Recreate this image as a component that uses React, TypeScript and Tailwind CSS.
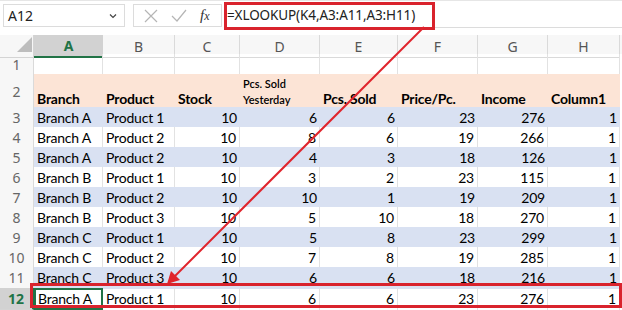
import React from "react";

const COLS = "grid grid-cols-[34px_69px_72px_65px_80px_78px_80px_70px_72px]";
const UI = { fontFamily: '"Noto Sans", "Open Sans", sans-serif' };
const CELL = { fontFamily: 'Lato, "Liberation Sans", sans-serif' };

const rows: (string | number)[][] = [
  ["Branch A", "Product 1", 10, 6, 6, 23, 276, 1],
  ["Branch A", "Product 2", 10, 8, 6, 19, 266, 1],
  ["Branch A", "Product 2", 10, 4, 3, 18, 126, 1],
  ["Branch B", "Product 1", 10, 3, 2, 23, 115, 1],
  ["Branch B", "Product 2", 10, 10, 1, 19, 209, 1],
  ["Branch B", "Product 3", 10, 5, 10, 18, 270, 1],
  ["Branch C", "Product 1", 10, 5, 8, 23, 299, 1],
  ["Branch C", "Product 2", 10, 7, 8, 19, 285, 1],
  ["Branch C", "Product 3", 10, 6, 6, 18, 216, 1],
];

function RowNum({ n, active }: { n: number; active?: boolean }) {
  return (
    <div
      style={UI}
      className={
        active
          ? "flex items-center justify-center bg-[#d2d2d2] border-r-2 border-r-[#217346] border-b border-b-[#d4d4d4] text-[14px] font-bold text-[#217346]"
          : "flex items-center justify-center bg-[#f7f7f7] border-r border-b border-[#dadada] text-[14px] text-[#666]"
      }
    >
      {n}
    </div>
  );
}

function DataRow({ n, data, shaded }: { n: number; data: (string | number)[]; shaded: boolean }) {
  return (
    <div className={`${COLS} h-[20px]`}>
      <RowNum n={n} />
      {data.map((v, i) => (
        <div
          key={i}
          style={CELL}
          className={`flex items-center whitespace-nowrap overflow-hidden text-[14px] tracking-[-0.2px] text-black leading-none px-[3px] ${
            typeof v === "number" ? "justify-end" : "justify-start"
          } ${shaded ? "bg-[#d9e1f2]" : "bg-white border-r border-[#e2e2e2]"}`}
        >
          {v}
        </div>
      ))}
    </div>
  );
}

export default function App() {
  const letters = ["A", "B", "C", "D", "E", "F", "G", "H"];
  const heads = ["Branch", "Product", "Stock", "", "Pcs. Sold", "Price/Pc.", "Income", "Column1"];
  const last = ["Branch A", "Product 1", 10, 6, 6, 23, 276, 1];

  return (
    <div className="relative w-[622px] h-[310px] overflow-hidden bg-white">
      {/* formula bar */}
      <div className="h-[35px] border-t border-[#e6e6e6] flex items-start pt-[3px] bg-white">
        <div
          style={UI}
          className="ml-[3px] w-[122px] h-[23px] border border-[#dcdcdc] flex items-center justify-between px-[4px] text-[14px] text-[#222]"
        >
          <span>A12</span>
          <svg width="10" height="10" viewBox="0 0 10 10" className="mr-[2px]">
            <path d="M2 3.5 L5 6.5 L8 3.5" fill="none" stroke="#444" strokeWidth="1.2" />
          </svg>
        </div>
        <div className="ml-[8px] w-[89px] h-[23px] border border-[#dcdcdc] flex items-center">
          <svg width="14" height="14" viewBox="0 0 14 14" className="ml-[10px]">
            <path d="M1 1 L13 13 M13 1 L1 13" stroke="#b5b5b5" strokeWidth="1.2" />
          </svg>
          <svg width="16" height="14" viewBox="0 0 16 14" className="ml-[13px]">
            <path d="M1 7 L6 12 L15 1" fill="none" stroke="#b5b5b5" strokeWidth="1.2" />
          </svg>
          <span
            style={{ fontFamily: '"Liberation Serif", serif' }}
            className="ml-[13px] text-[15px] italic text-[#333]"
          >
            f<span className="text-[12px]">x</span>
          </span>
        </div>
        <div
          style={UI}
          className="ml-[2px] flex-1 h-[24px] border-b border-[#dcdcdc] flex items-center pl-[3px] text-[13.5px] tracking-[-0.1px] text-[#222]"
        >
          =XLOOKUP(K4,A3:A11,A3:H11)
        </div>
      </div>

      {/* column headers */}
      <div className={`${COLS} h-[19px] bg-[#f7f7f7]`}>
        <div className="relative border-r border-b border-[#d4d4d4]">
          <svg width="34" height="19" viewBox="0 0 34 19" className="absolute inset-0">
            <polygon points="32,2 32,17 17,17" fill="#bdbdbd" />
          </svg>
        </div>
        {letters.map((l) => (
          <div
            key={l}
            style={UI}
            className={
              l === "A"
                ? "flex items-center justify-center bg-[#d2d2d2] border-b-2 border-[#217346] text-[14px] font-bold text-[#217346]"
                : "flex items-center justify-center border-r border-b border-[#dadada] text-[14px] text-[#555]"
            }
          >
            {l}
          </div>
        ))}
      </div>

      {/* row 1 */}
      <div className={`${COLS} h-[20px]`}>
        <RowNum n={1} />
        {letters.map((l) => (
          <div key={l} className="border-r border-[#e2e2e2] border-b border-b-[#4472c4]" />
        ))}
      </div>

      {/* row 2 - table headers */}
      <div className={`${COLS} h-[33px]`}>
        <RowNum n={2} />
        {heads.map((h, i) =>
          i === 3 ? (
            <div
              key={i}
              style={CELL}
              className="bg-[#fce4d6] border-b border-[#8ea9db] flex flex-col justify-start pl-[3px] pt-[2px] text-[11px] font-semibold leading-[16px] text-black"
            >
              <span>Pcs. Sold</span>
              <span>Yesterday</span>
            </div>
          ) : (
            <div
              key={i}
              style={CELL}
              className="bg-[#fce4d6] border-b border-[#8ea9db] flex items-end whitespace-nowrap pl-[3px] text-[14px] tracking-[-0.2px] leading-[18px] font-bold text-black"
            >
              {h}
            </div>
          )
        )}
      </div>

      {rows.map((r, i) => (
        <DataRow key={i} n={i + 3} data={r} shaded={i % 2 === 0} />
      ))}

      {/* row 12 */}
      <div className={`${COLS} h-[20px] border-t border-[#4472c4]`}>
        <RowNum n={12} active />
        {last.map((v, i) => (
          <div
            key={i}
            style={CELL}
            className={`flex items-center whitespace-nowrap overflow-hidden text-[14px] tracking-[-0.2px] text-black leading-none ${
              typeof v === "number" ? "justify-end" : "justify-start"
            } ${i === 0 ? "border-2 border-[#217346] px-[2px]" : "border-r border-[#e2e2e2] px-[3px]"}`}
          >
            {v}
          </div>
        ))}
      </div>

      {/* annotations */}
      <div className="absolute left-[224px] top-[2px] w-[211px] h-[28px] border-[3px] border-[#d9232d]" />
      <div className="absolute left-[30px] top-[283px] w-[592px] h-[25px] border-[3px] border-[#d9232d]" />
      <svg className="absolute inset-0 pointer-events-none" width="622" height="310" viewBox="0 0 622 310">
        <line x1="424" y1="27" x2="175" y2="276" stroke="#e0242c" strokeWidth="2" />
        <polygon points="167,284 171,271 180,280" fill="#e0242c" />
      </svg>
    </div>
  );
}
